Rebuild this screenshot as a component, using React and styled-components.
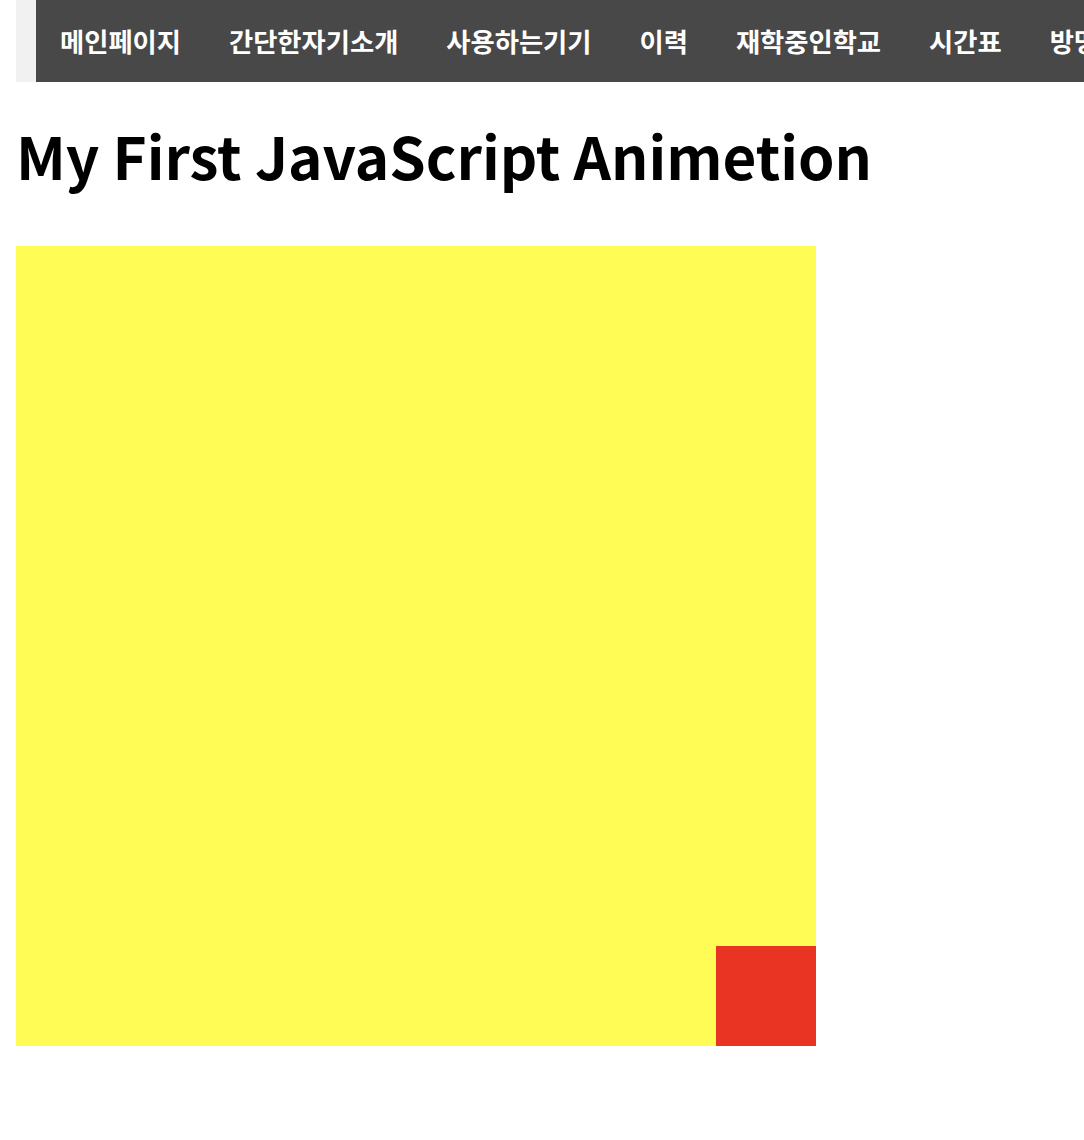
import styled, { createGlobalStyle } from 'styled-components';

const GlobalStyle = createGlobalStyle`
  html, body {
    margin: 0;
    padding: 0;
    background: #ffffff;
    overflow-x: hidden;
  }
  body {
    font-family: "Noto Sans CJK KR", "Noto Sans", sans-serif;
  }
`;

const Page = styled.div`
  padding: 0 16px 80px;
`;

const NavStrip = styled.div`
  background-color: #f1f1f1;
  padding-left: 20px;
  width: 1200px;
`;

const NavList = styled.ul`
  display: flex;
  align-items: center;
  height: 82px;
  margin: 0;
  padding: 0;
  list-style: none;
  background-color: #484848;
  white-space: nowrap;
  overflow: hidden;
`;

const NavItem = styled.li`
  padding: 0 24px;
  color: #ffffff;
  font-size: 26.3px;
  font-weight: 700;
  line-height: 34px;
`;

const Title = styled.h1`
  margin: 27px 0 0;
  font-size: 58.4px;
  line-height: 92px;
  font-weight: 700;
  color: #000000;
`;

const Container = styled.div`
  position: relative;
  width: 800px;
  height: 800px;
  margin-top: 45px;
  background-color: #fffc55;
`;

const Animate = styled.div`
  position: absolute;
  width: 100px;
  height: 100px;
  background-color: #e93323;
`;

const menu = ['메인페이지', '간단한자기소개', '사용하는기기', '이력', '재학중인학교', '시간표', '방명록'];

function App() {
  const pos = 700;

  return (
    <Page>
      <GlobalStyle />
      <NavStrip>
        <NavList>
          {menu.map((item) => (
            <NavItem key={item}>{item}</NavItem>
          ))}
        </NavList>
      </NavStrip>
      <Title>My First JavaScript Animetion</Title>
      <Container>
        <Animate style={{ top: pos, left: pos }} />
      </Container>
    </Page>
  );
}

export default App;
